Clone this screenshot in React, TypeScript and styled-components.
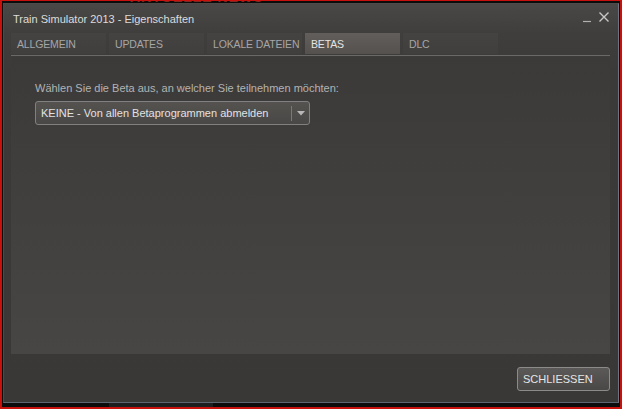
import React from "react";
import styled, { createGlobalStyle } from "styled-components";

const Global = createGlobalStyle`
  html, body { margin: 0; padding: 0; background: #0d0d0d; }
  body { font-family: "Liberation Sans", Arial, sans-serif; }
  * { box-sizing: border-box; }
`;

const Frame = styled.div`
  width: 622px;
  height: 409px;
  border: 2px solid #c8100c;
  border-top-width: 1px;
  background: #0c0c0c;
  display: flex;
  flex-direction: column;
  overflow: hidden;
  position: relative;
`;

const BehindText = styled.div`
  position: absolute;
  top: -12px;
  left: 128px;
  font-size: 14px;
  font-weight: bold;
  letter-spacing: 1px;
  color: #7e2a22;
  white-space: nowrap;
`;

const Window = styled.div`
  margin: 2px 1px 4px 1px;
  flex: 1;
  display: flex;
  flex-direction: column;
  border: 1px solid #4c4b4a;
  border-right-color: #6b7480;
  border-bottom-color: #5d6570;
  background: linear-gradient(#4a4846 0px, #403e3d 30px, #3b3a39 70px, #393837 100%);
  padding: 0 8px 11px 7px;
  position: relative;
  z-index: 1;
`;

const TitleBar = styled.div`
  height: 29px;
  display: flex;
  align-items: center;
  justify-content: space-between;
  padding-left: 2px;
`;

const Title = styled.div`
  font-size: 11px;
  color: #dcdcdc;
  white-space: nowrap;
`;

const WinControls = styled.div`
  display: flex;
  align-items: center;
  gap: 6px;
  margin-top: -4px;
`;

const Tabs = styled.div`
  display: flex;
  gap: 3px;
  height: 21px;
`;

const Tab = styled.div<{ $active?: boolean }>`
  width: 95px;
  height: 21px;
  padding-left: 6px;
  display: flex;
  align-items: center;
  font-size: 10.5px;
  letter-spacing: -0.15px;
  white-space: nowrap;
  overflow: hidden;
  color: ${(p) => (p.$active ? "#e4e4e4" : "#a6a6a6")};
  background: ${(p) =>
    p.$active
      ? "linear-gradient(#625e5b, #54514e)"
      : "linear-gradient(#454342, #403f3e)"};
`;

const Rule = styled.div`
  height: 1px;
  margin-top: 1px;
  background: #6a6968;
`;

const Panel = styled.div`
  flex: 1;
  margin-top: 1px;
  background: linear-gradient(#3b3a39, #42413f 60%, #474644);
  padding: 25px 24px;
  display: flex;
  flex-direction: column;
  align-items: flex-start;
`;

const Label = styled.div`
  font-size: 11px;
  color: #b3b3b3;
  line-height: 13px;
  white-space: nowrap;
`;

const Select = styled.div`
  margin-top: 6px;
  width: 275px;
  height: 24px;
  border: 1px solid #808080;
  border-radius: 3px;
  background: linear-gradient(#55524f, #4a4846);
  display: flex;
  align-items: center;
`;

const SelectText = styled.div`
  flex: 1;
  padding-left: 5px;
  font-size: 11px;
  color: #e2e2e2;
  white-space: nowrap;
`;

const SelectSep = styled.div`
  width: 1px;
  height: 15px;
  background: #7a7878;
`;

const Arrow = styled.div`
  width: 17px;
  display: flex;
  justify-content: center;
  align-items: center;
`;

const Footer = styled.div`
  height: 37px;
  display: flex;
  justify-content: flex-end;
  align-items: flex-end;
`;

const Button = styled.div`
  width: 93px;
  height: 24px;
  border: 1px solid #8c8b8a;
  border-radius: 3px;
  background: linear-gradient(#5c5a58, #4a4846);
  font-size: 11px;
  color: #e6e6e6;
  display: flex;
  align-items: center;
  padding-left: 5px;
  white-space: nowrap;
`;

const BottomStrip = styled.div`
  position: absolute;
  bottom: 0;
  left: 107px;
  width: 104px;
  height: 4px;
  background: #1c1e20;
`;

export default function App() {
  return (
    <>
      <Global />
      <Frame>
        <BehindText>AKTUELLE NEWS</BehindText>
        <Window>
          <TitleBar>
            <Title>Train Simulator 2013 - Eigenschaften</Title>
            <WinControls>
              <svg width="10" height="12" viewBox="0 0 10 12">
                <line x1="1" y1="10.5" x2="9" y2="10.5" stroke="#b0b0b0" strokeWidth="1.2" />
              </svg>
              <svg width="12" height="12" viewBox="0 0 12 12">
                <path d="M1.5 1.5 L10.5 10.5 M10.5 1.5 L1.5 10.5" stroke="#c8c8c8" strokeWidth="1.4" />
              </svg>
            </WinControls>
          </TitleBar>
          <Tabs>
            <Tab>ALLGEMEIN</Tab>
            <Tab>UPDATES</Tab>
            <Tab>LOKALE DATEIEN</Tab>
            <Tab $active>BETAS</Tab>
            <Tab>DLC</Tab>
          </Tabs>
          <Rule />
          <Panel>
            <Label>Wählen Sie die Beta aus, an welcher Sie teilnehmen möchten:</Label>
            <Select>
              <SelectText>KEINE - Von allen Betaprogrammen abmelden</SelectText>
              <SelectSep />
              <Arrow>
                <svg width="8" height="5" viewBox="0 0 8 5">
                  <path d="M0 0 L8 0 L4 4.5 Z" fill="#b8b8b8" />
                </svg>
              </Arrow>
            </Select>
          </Panel>
          <Footer>
            <Button>SCHLIESSEN</Button>
          </Footer>
        </Window>
        <BottomStrip />
      </Frame>
    </>
  );
}
